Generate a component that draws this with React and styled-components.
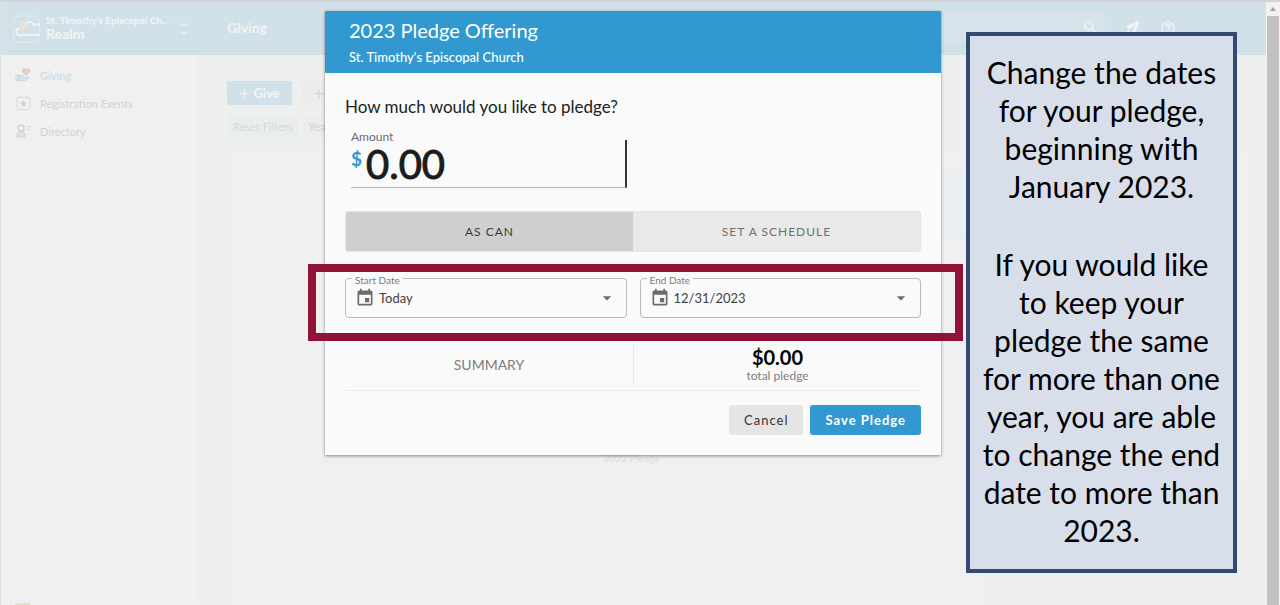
import React, { useState } from "react";
import styled, { createGlobalStyle } from "styled-components";
import { MdArrowDropDown, MdEvent, MdSearch, MdHelpOutline } from "react-icons/md";

const Color = {
  blue: "#3199cf",
  paleBlue: "#d1e1e9",
  paper: "#fafafa",
  wash: "#f0f0f0",
  canvas: "#eef0f0",
  faintLine: "#ebeced",
  faintText: "#d9d9d9",
  maroon: "#901237",
  navy: "#334b73",
};

const rowHeights = [39, 37, 54, 55, 54, 37, 54];

const noteStart = ["Change the dates", "for your pledge,", "beginning with", "January 2023."];

const noteEnd = [
  "If you would like",
  "to keep your",
  "pledge the same",
  "for more than one",
  "year, you are able",
  "to change the end",
  "date to more than",
  "2023.",
];

const BrandMark = () => (
  <svg width="28" height="28" viewBox="0 0 28 28" fill="none">
    <rect x="1" y="1" width="26" height="26" rx="6" stroke="#e4ebee" />
    <path d="M27 20H8c-5 0-5-6-1-6.500" stroke="#f1f3f3" strokeWidth="1.800" strokeLinecap="round" />
    <path d="M14 8c3-2 7-1 8 2 2-1 4-1 5 0" stroke="#f1f3f3" strokeWidth="1.800" strokeLinecap="round" />
    <path d="M11 5l1.500 4.500L17 11l-4.500 1.500L11 17l-1.500-4.500L5 11l4.500-1.500z" fill="#f0e3c8" />
  </svg>
);

const Chevrons = () => (
  <svg width="8" height="14" viewBox="0 0 8 14" fill="none" stroke="#f1f3f3" strokeWidth="1.500">
    <path d="M1 4.500l3-3 3 3M1 9.500l3 3 3-3" />
  </svg>
);

const GivingIcon = () => (
  <svg width="17" height="16" viewBox="0 0 17 16" fill="none">
    <path d="M11 8L8 5C6 2.500 9.500.5 11 2.800 12.500.5 16 2.500 14 5z" fill="#e6cfcd" stroke="#dfc0be" />
    <path d="M1 8h2.500v6H1zM4 8.500h3l2.500 1.500H13c1.500 0 1.500 1 .5 1.500L10 13.500H4z" fill="#dce6ec" stroke="#c5dae6" />
    <path d="M7 11.500h3" stroke="#c5dae6" />
  </svg>
);

const EventIcon = () => (
  <svg width="17" height="16" viewBox="0 0 17 16" fill="none">
    <rect x="2" y="2.500" width="13" height="12" rx="1.500" stroke="#dadada" />
    <path d="M5 1v2M12 1v2" stroke="#dadada" strokeWidth="1.500" />
    <path d="M8.500 5l1.100 2.300 2.500.3-1.800 1.700.4 2.500-2.200-1.200-2.200 1.200.4-2.500-1.800-1.700 2.500-.3z" fill="#d2d2d2" />
  </svg>
);

const DirectoryIcon = () => (
  <svg width="17" height="16" viewBox="0 0 17 16" fill="none">
    <circle cx="6" cy="5" r="3" stroke="#d2d2d2" strokeWidth="1.500" />
    <path d="M2 14v-2c0-2 1.500-3.500 4-3.500s4 1.500 4 3.500v2z" fill="#dedede" stroke="#d2d2d2" />
    <path d="M11.500 3.500H16M11.500 6.500h3" stroke="#d9d9d9" />
  </svg>
);

const RocketIcon = () => (
  <svg width="17" height="16" viewBox="0 0 17 16" fill="#f1f3f3">
    <path d="M2 8c2-3 4-4.500 7-4.500C10.500 2 13 1 15 1c0 3-.5 4.500-2 6.500 0 3-1.500 5-4 6.500l-.5-3.500L12 5 6 9z" />
    <path d="M2 14c0-2 1-3.500 3-4l1 1c-.5 2-2 3-4 3z" />
  </svg>
);

const DateField = ({ id, label, options }) => (
  <FieldBox>
    <FieldLabel htmlFor={id}>{label}</FieldLabel>
    <MdEvent size={20} />
    <FieldSelect id={id}>
      {options.map((option) => <option key={option}>{option}</option>)}
    </FieldSelect>
    <MdArrowDropDown size={20} />
  </FieldBox>
);

const Backdrop = () => (
  <Screen>
    <Sidebar>
      <Brand>
        <BrandMark />
        <BrandText>
          <small>St. Timothy's Episcopal Ch...</small>
          <strong>Realm</strong>
        </BrandText>
        <Chevrons />
      </Brand>
      <Nav>
        <NavLink href="#giving" $active><GivingIcon />Giving</NavLink>
        <NavLink href="#events"><EventIcon />Registration Events</NavLink>
        <NavLink href="#directory"><DirectoryIcon />Directory</NavLink>
      </Nav>
      <SidebarTag />
    </Sidebar>
    <Main>
      <TopBar>
        <h1>Giving</h1>
        <SearchBox><MdSearch size={17} /></SearchBox>
        <RocketIcon />
        <MdHelpOutline size={16} />
      </TopBar>
      <Content>
        <Actions>
          <GiveButton type="button"><span>+</span>Give</GiveButton>
          <GiveButton type="button" $plain aria-label="Add"><span>+</span></GiveButton>
        </Actions>
        <Filters>
          <FilterButton type="button" $active>Reset Filters</FilterButton>
          <FilterButton type="button">Year</FilterButton>
        </Filters>
        <Cards>
          <HistoryCard>
            <ChartPane>2022 Pledge</ChartPane>
            <Rows>
              <RowsHead />
              {rowHeights.map((height, i) => <Row key={i} style={{ height }} />)}
            </Rows>
          </HistoryCard>
          <SideCard />
        </Cards>
      </Content>
    </Main>
  </Screen>
);

const PledgeDialog = () => {
  const [mode, setMode] = useState("can");
  const [amount, setAmount] = useState("0.00");
  return (
    <Dialog role="dialog" aria-labelledby="pledge-title">
      <DialogHeader>
        <h2 id="pledge-title">2023 Pledge Offering</h2>
        <p>St. Timothy's Episcopal Church</p>
      </DialogHeader>
      <DialogBody>
        <Question>How much would you like to pledge?</Question>
        <Amount>
          <label htmlFor="amount">Amount</label>
          <AmountRow>
            <span>$</span>
            <input id="amount" value={amount} onChange={(e) => setAmount(e.target.value)} />
          </AmountRow>
        </Amount>
        <Toggle>
          <ToggleButton type="button" $active={mode === "can"} onClick={() => setMode("can")}>AS CAN</ToggleButton>
          <ToggleButton type="button" $active={mode === "schedule"} onClick={() => setMode("schedule")}>SET A SCHEDULE</ToggleButton>
        </Toggle>
        <Dates>
          <DateField id="start" label="Start Date" options={["Today"]} />
          <DateField id="end" label="End Date" options={["12/31/2023"]} />
          <Highlight />
        </Dates>
        <Summary>
          <div>SUMMARY</div>
          <Total>
            <strong>$0.00</strong>
            <span>total pledge</span>
          </Total>
        </Summary>
        <Buttons>
          <DialogButton type="button">Cancel</DialogButton>
          <DialogButton type="button" $primary>Save Pledge</DialogButton>
        </Buttons>
      </DialogBody>
    </Dialog>
  );
};

export default function App() {
  return (
    <>
      <GlobalStyle />
      <Page>
        <Stage>
          <Backdrop />
          <Overlay><PledgeDialog /></Overlay>
        </Stage>
        <Scrollbar>
          <svg width="14" height="14" viewBox="0 0 14 14"><path d="M4 9l3-4 3 4z" fill="#a3a3a3" /></svg>
          <Thumb />
        </Scrollbar>
        <Note>
          <p>{noteStart.join("\n")}</p>
          <p>{noteEnd.join("\n")}</p>
        </Note>
      </Page>
    </>
  );
}

const GlobalStyle = createGlobalStyle`
  * { box-sizing: border-box; }
  body {
    margin: 0;
    font-family: Lato, "Liberation Sans", sans-serif;
    overflow: hidden;
  }
  h1, h2, p { margin: 0; font-weight: 400; }
  button, input, select { font-family: inherit; }
  a { text-decoration: none; }
`;

const Page = styled.div`
  position: relative;
  display: flex;
  height: 100vh;
  border-top: 2px solid #d2d4d5;
`;

const Stage = styled.div`
  position: relative;
  flex: 1;
  min-width: 0;
`;

const Screen = styled.div`
  display: flex;
  height: 100%;
  overflow: hidden;
  background: ${Color.canvas};
`;

const Sidebar = styled.aside`
  display: flex;
  flex-direction: column;
  flex: none;
  width: 199px;
  background: ${Color.wash};
  border-left: 1px solid #dfe1e1;
`;

const Brand = styled.div`
  display: flex;
  align-items: center;
  height: 53px;
  padding: 0 11px;
  background: ${Color.paleBlue};
`;

const BrandText = styled.div`
  flex: 1;
  margin-left: 6px;
  padding-bottom: 3px;
  color: #f1f3f3;
  font-weight: 700;
  white-space: nowrap;
  small, strong { display: block; }
  small {
    font-size: 10px;
    line-height: 12px;
  }
  strong {
    font-size: 14px;
    line-height: 15px;
  }
`;

const Nav = styled.nav`
  flex: 1;
  padding: 6px 14px;
  border-right: 1px solid #ececec;
`;

const NavLink = styled.a`
  display: flex;
  align-items: center;
  gap: 8px;
  height: 28px;
  font-size: 11px;
  font-weight: ${({ $active }) => ($active ? 700 : 400)};
  color: ${({ $active }) => ($active ? "#cfdfe9" : "#d2d2d2")};
`;

const SidebarTag = styled.div`
  width: 15px;
  height: 2px;
  margin-left: 14px;
  background: #dce4cd;
`;

const Main = styled.main`
  flex: 1;
  min-width: 0;
  display: flex;
  flex-direction: column;
`;

const TopBar = styled.header`
  display: flex;
  align-items: center;
  flex: none;
  gap: 19px;
  height: 53px;
  padding: 0 90px 2px 28px;
  background: ${Color.paleBlue};
  color: #f1f3f3;
  h1 {
    font-size: 14px;
    font-weight: 700;
  }
`;

const SearchBox = styled.div`
  flex: 1;
  display: flex;
  align-items: center;
  justify-content: flex-end;
  height: 34px;
  margin-left: 150px;
  padding-right: 6px;
  border-radius: 6px;
  background: #d6e3ea;
`;

const Content = styled.div`
  flex: 1;
  display: flex;
  flex-direction: column;
  padding: 26px 13px 0 28px;
`;

const Actions = styled.div`
  display: flex;
  gap: 10px;
`;

const GiveButton = styled.button`
  display: flex;
  align-items: center;
  gap: 4px;
  height: 24px;
  padding: 0 12px;
  border: 0;
  border-radius: 2px;
  font-size: 13px;
  font-weight: 700;
  background: ${({ $plain }) => ($plain ? "#ececec" : Color.paleBlue)};
  color: ${({ $plain }) => ($plain ? Color.faintText : "#f3f3f3")};
  span {
    font-size: 18px;
    font-weight: 400;
  }
`;

const Filters = styled.div`
  display: flex;
  gap: 4px;
  margin: 10px 0 16px;
`;

const FilterButton = styled.button`
  height: 22px;
  padding: 0 6px;
  border: 0;
  border-radius: 2px;
  font-size: 11px;
  background: #ebecec;
  color: ${({ $active }) => ($active ? "#ccdce5" : "#d0d0d0")};
`;

const Cards = styled.div`
  flex: 1;
  display: flex;
  align-items: flex-start;
  gap: 10px;
`;

const HistoryCard = styled.section`
  flex: 3;
  display: flex;
  align-self: stretch;
  padding-top: 14px;
  border: 1px solid ${Color.faintLine};
  border-bottom: 0;
  border-radius: 8px 8px 0 0;
  background: ${Color.wash};
`;

const ChartPane = styled.div`
  flex: 1;
  padding: 284px 0 0 100px;
  font-size: 10px;
  text-align: center;
  color: #dcdcdc;
`;

const Rows = styled.div`
  width: 52px;
`;

const RowsHead = styled.div`
  height: 71px;
  background: #eceff1;
`;

const Row = styled.div`
  border-top: 1px solid ${Color.faintLine};
`;

const SideCard = styled.section`
  flex: 1;
  height: 331px;
  border: 1px solid ${Color.faintLine};
  border-radius: 8px;
  background: ${Color.wash};
`;

const Overlay = styled.div`
  position: absolute;
  inset: 0;
  display: flex;
  align-items: flex-start;
  justify-content: center;
  padding-top: 9px;
`;

const Dialog = styled.div`
  width: 616px;
  max-width: 100%;
  background: ${Color.paper};
  box-shadow: 0 1px 3px rgba(0, 0, 0, 0.45);
`;

const DialogHeader = styled.header`
  height: 62px;
  padding: 6px 24px;
  background: ${Color.blue};
  color: #fff;
  h2 {
    font-size: 20px;
    line-height: 26px;
  }
  p {
    font-size: 13px;
    font-weight: 500;
    line-height: 28px;
  }
`;

const DialogBody = styled.div`
  padding: 22px 20px 20px;
`;

const Question = styled.p`
  font-size: 17px;
  line-height: 24px;
  color: #212121;
`;

const Amount = styled.div`
  width: 276px;
  margin: 10px 0 0 6px;
  label {
    display: block;
    font-size: 12px;
    line-height: 16px;
    color: #6a6a6a;
  }
`;

const AmountRow = styled.div`
  display: flex;
  height: 48px;
  margin-top: -5px;
  border-bottom: 1px solid #b5b5b5;
  border-right: 2px solid #333;
  span {
    padding-top: 7px;
    font-size: 19px;
    line-height: 24px;
    color: ${Color.blue};
    font-weight: 700;
  }
  input {
    width: 100%;
    min-width: 0;
    padding: 0 4px;
    border: 0;
    outline: 0;
    background: none;
    font-size: 40px;
    -webkit-text-stroke: 1px #1c1c1c;
    color: #1c1c1c;
  }
`;

const Toggle = styled.div`
  display: flex;
  height: 41px;
  margin-top: 23px;
  border: 1px solid #e4e4e4;
  border-radius: 3px;
  overflow: hidden;
`;

const ToggleButton = styled.button`
  flex: 1;
  border: 0;
  font-size: 12px;
  letter-spacing: 1px;
  background: ${({ $active }) => ($active ? "#cfcfcf" : "#e9e9e9")};
  color: ${({ $active }) => ($active ? "#3c3c3c" : "#6f6f6f")};
`;

const Dates = styled.div`
  position: relative;
  display: grid;
  grid-template-columns: 1fr 1fr;
  gap: 13px;
  margin-top: 26px;
`;

const FieldBox = styled.div`
  position: relative;
  display: flex;
  align-items: center;
  height: 40px;
  padding: 0 9px;
  border: 1px solid #b9b9b9;
  border-radius: 4px;
  color: #6b6b6b;
  svg { flex: none; }
`;

const FieldLabel = styled.label`
  position: absolute;
  top: -6px;
  left: 6px;
  padding: 0 3px;
  background: ${Color.paper};
  font-size: 10px;
  line-height: 14px;
  color: #7a7a7a;
`;

const FieldSelect = styled.select`
  flex: 1;
  min-width: 0;
  padding: 0 4px;
  border: 0;
  outline: 0;
  appearance: none;
  background: none;
  font-size: 13px;
  color: #3f3f3f;
`;

const Highlight = styled.div`
  position: absolute;
  inset: -14px -42px -23px -37px;
  border: 8px solid ${Color.maroon};
  pointer-events: none;
`;

const Summary = styled.div`
  display: grid;
  grid-template-columns: 1fr 1fr;
  align-items: center;
  margin-top: 27px;
  padding-bottom: 7px;
  border-bottom: 1px solid #ebebeb;
  font-size: 14px;
  text-align: center;
  color: #7d7d7d;
`;

const Total = styled.div`
  display: flex;
  flex-direction: column;
  height: 38px;
  border-left: 1px solid #e6e6e6;
  strong {
    font-size: 20px;
    line-height: 24px;
    font-weight: 700;
    color: #000;
  }
  span {
    font-size: 12px;
    line-height: 14px;
  }
`;

const Buttons = styled.div`
  display: flex;
  justify-content: flex-end;
  gap: 7px;
  margin-top: 14px;
`;

const DialogButton = styled.button`
  height: 30px;
  padding: 0 15px;
  border: 0;
  border-radius: 3px;
  font-size: 13px;
  letter-spacing: 1px;
  font-weight: ${({ $primary }) => ($primary ? 700 : 400)};
  background: ${({ $primary }) => ($primary ? Color.blue : "#e5e5e5")};
  color: ${({ $primary }) => ($primary ? "#fff" : "#333")};
`;

const Scrollbar = styled.div`
  display: flex;
  flex-direction: column;
  width: 14px;
  padding: 0 1px;
  background: #f1f1f1;
  svg { margin-left: -1px; }
`;

const Thumb = styled.div`
  flex: 1;
  background: #c1c1c1;
`;

const Note = styled.aside`
  position: absolute;
  top: 30px;
  right: 43px;
  display: flex;
  flex-direction: column;
  gap: 40px;
  width: 271px;
  padding: 17px 0 20px;
  border: 4px solid ${Color.navy};
  background: #d8dfeb;
  font-family: "Gill Sans", "Gill Sans MT", Lato, sans-serif;
  font-size: 30px;
  line-height: 38px;
  text-align: center;
  white-space: pre-line;
  color: #000;
`;
